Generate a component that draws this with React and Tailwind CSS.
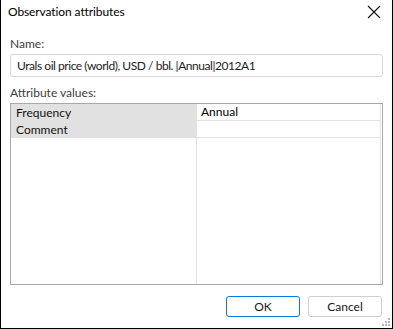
import React from "react";

export default function App() {
  const font = { fontFamily: "Lato, 'Liberation Sans', sans-serif" };
  return (
    <div
      className="w-[393px] h-[329px] bg-white border-x border-b border-black flex flex-col relative text-[12px] text-[#1a1a1a]"
      style={font}
    >
      <div className="h-[23px] flex items-center justify-between pl-[7px] pr-[11px] pt-[1px]">
        <span className="text-black tracking-[-0.1px]">Observation attributes</span>
        <svg width="14" height="14" viewBox="0 0 14 14">
          <path d="M1 1 L13 13 M13 1 L1 13" stroke="#111" strokeWidth="1.1" />
        </svg>
      </div>
      <div className="flex flex-col px-[9px] pt-[13px]">
        <div className="text-[#3c3c3c] leading-[15px]">Name:</div>
        <div className="mt-[3px] h-[23px] border border-[#d7d7d7] rounded-[3px] flex items-center pl-[6px] text-[#222] tracking-[-0.45px]">
          Urals oil price (world), USD / bbl. |Annual|2012A1
        </div>
        <div className="mt-[8px] text-[#3c3c3c] leading-[15px]">Attribute values:</div>
        <div className="mt-[3px] h-[182px] border border-[#a8a8a8] flex">
          <div className="w-[186px] border-r border-[#e3e3e3] flex flex-col">
            <div className="h-[17px] bg-[#e1e1e1] pl-[5px] leading-[17px] text-[#111] font-normal">Frequency</div>
            <div className="h-[17px] bg-[#e1e1e1] pl-[5px] leading-[17px] text-[#111] font-normal">Comment</div>
          </div>
          <div className="flex-1 flex flex-col mr-[1px] border-r border-[#e3e3e3]">
            <div className="h-[17px] border-b border-[#e3e3e3] pl-[4px] leading-[16px] text-black">Annual</div>
            <div className="h-[17px] border-b border-[#e3e3e3]"></div>
          </div>
        </div>
      </div>
      <div className="flex justify-end gap-[8px] pr-[10px] mt-[11px]">
        <button className="w-[74px] h-[21px] border border-[#0a78d4] rounded-[3px] bg-white text-[#1a1a1a]">OK</button>
        <button className="w-[74px] h-[21px] border border-[#d0d0d0] rounded-[3px] bg-white text-[#1a1a1a]">Cancel</button>
      </div>
      <svg className="absolute right-[1px] bottom-[1px]" width="10" height="10" viewBox="0 0 10 10">
        <rect x="7" y="1" width="2" height="2" fill="#b8b8b8" />
        <rect x="4" y="4" width="2" height="2" fill="#b8b8b8" />
        <rect x="7" y="4" width="2" height="2" fill="#b8b8b8" />
        <rect x="1" y="7" width="2" height="2" fill="#b8b8b8" />
        <rect x="4" y="7" width="2" height="2" fill="#b8b8b8" />
        <rect x="7" y="7" width="2" height="2" fill="#b8b8b8" />
      </svg>
    </div>
  );
}
